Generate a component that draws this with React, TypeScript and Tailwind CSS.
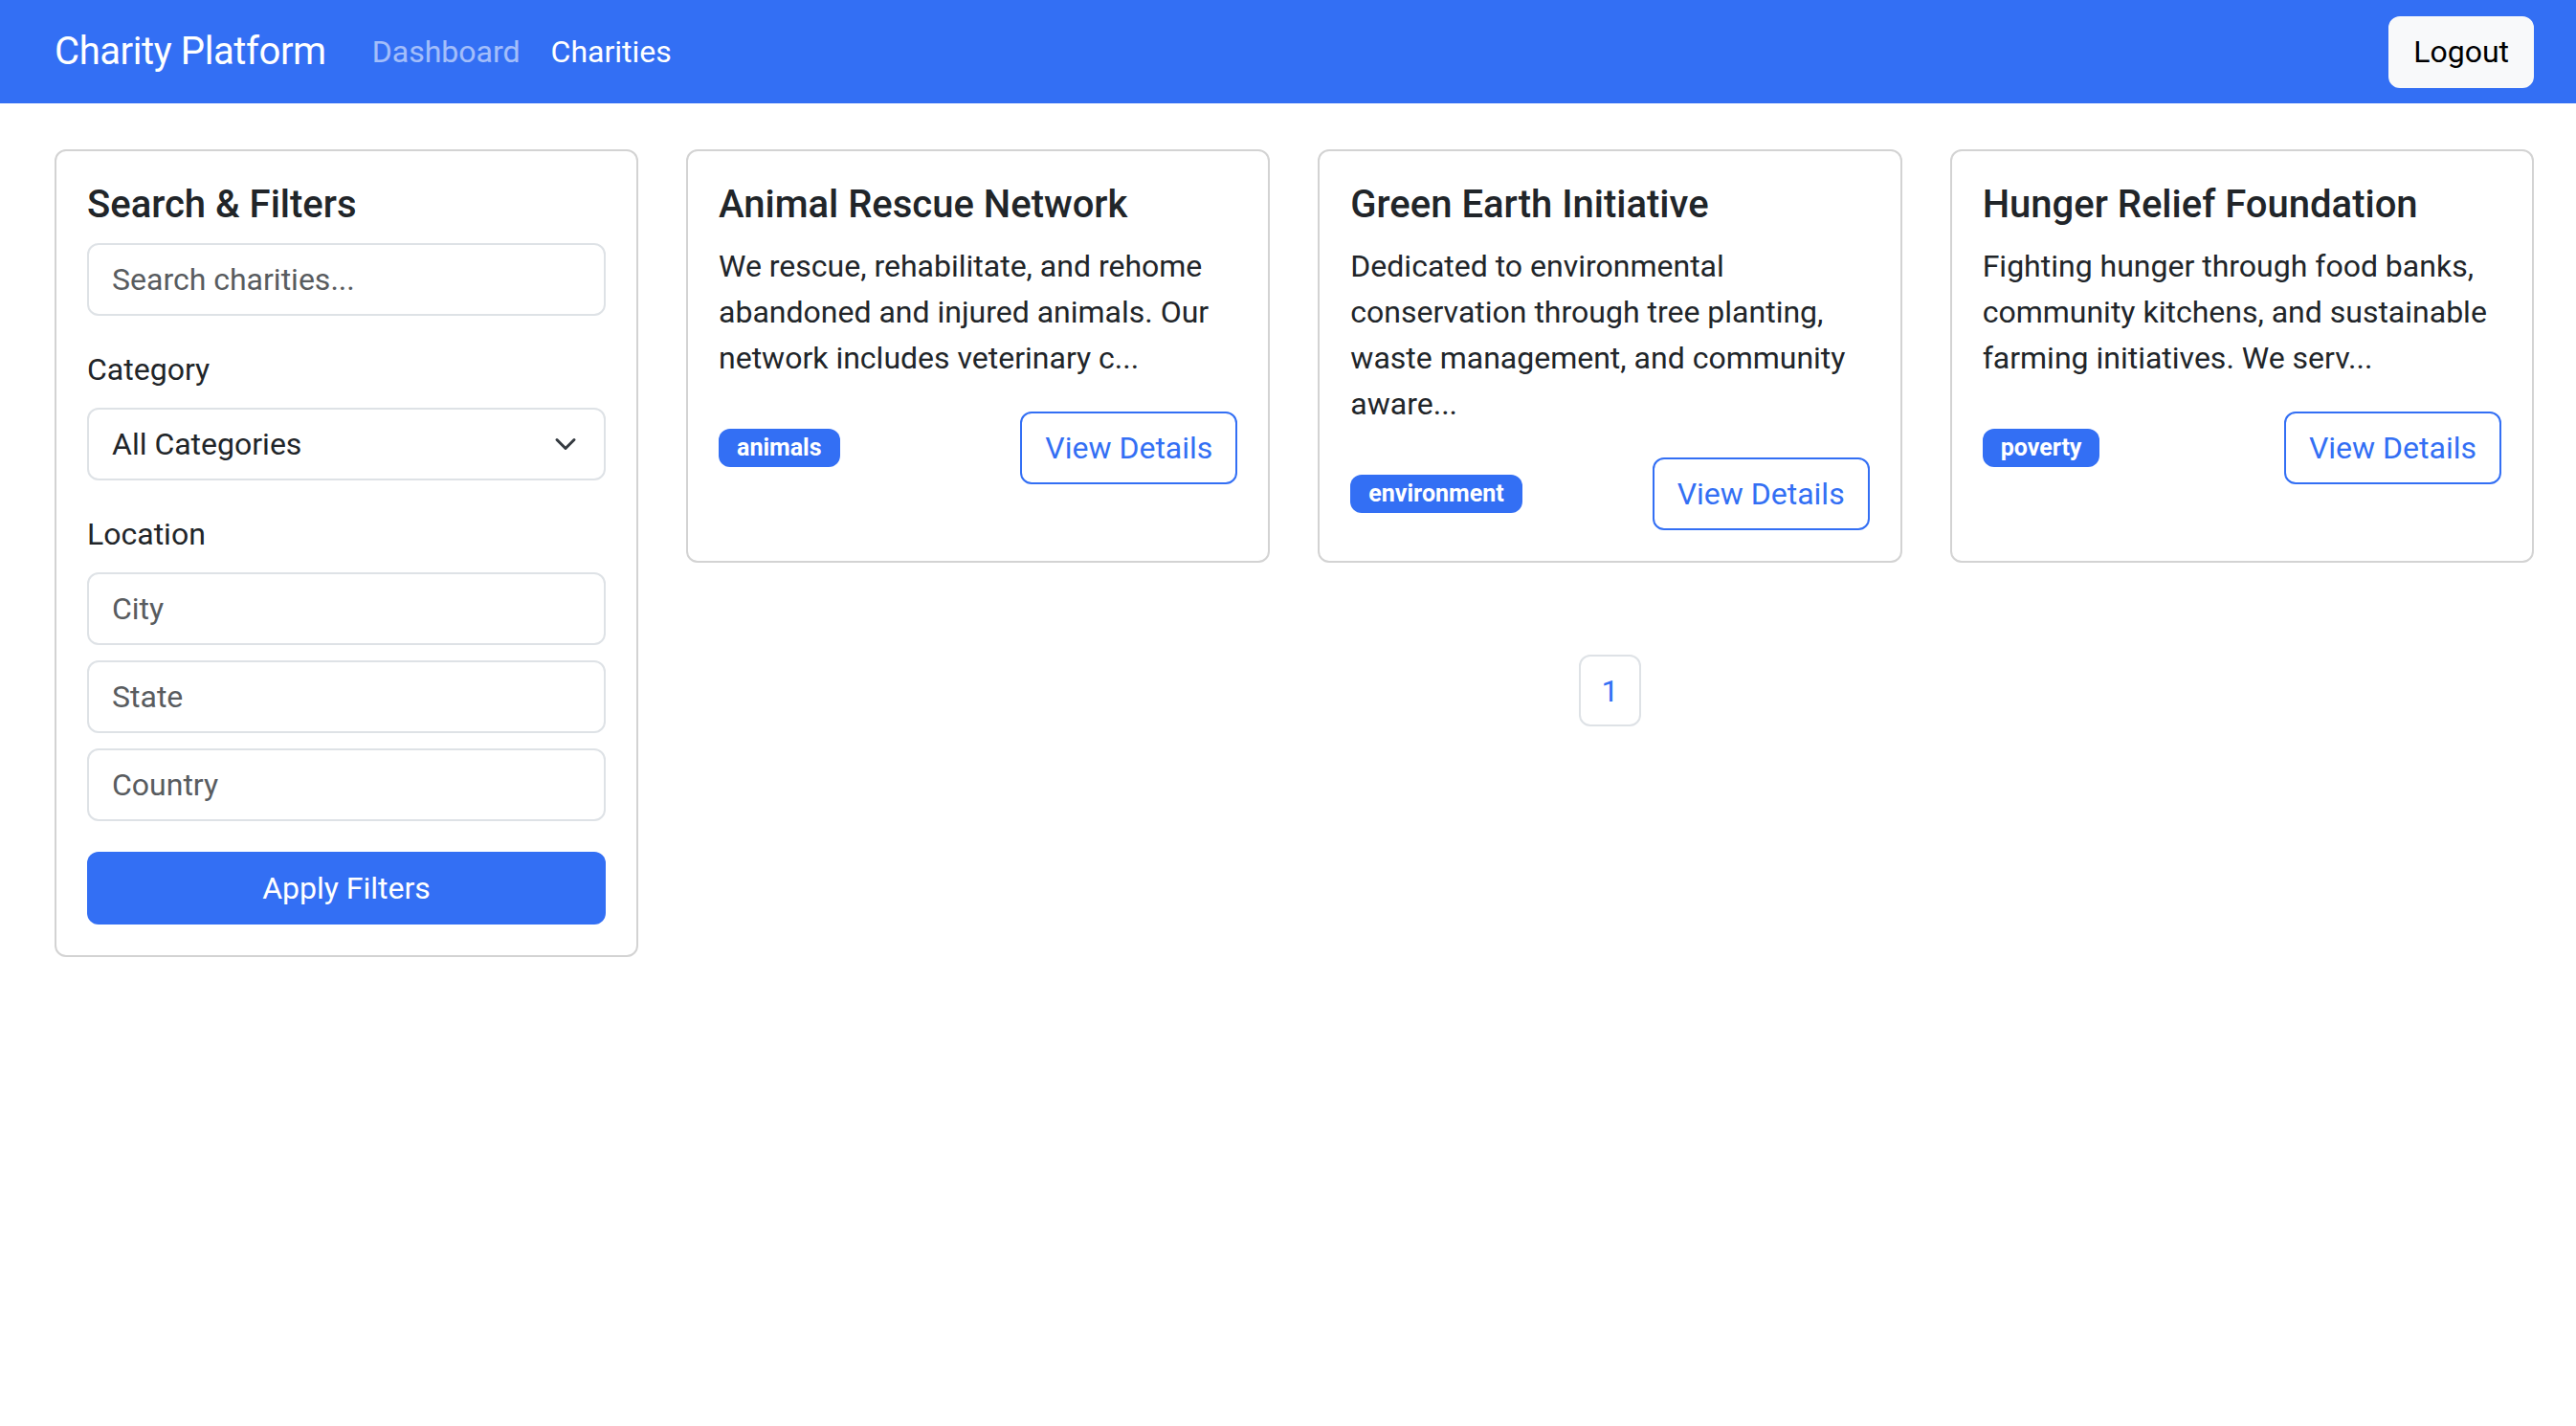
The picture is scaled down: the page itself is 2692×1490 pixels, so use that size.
import React from "react";

type Charity = {
  name: string;
  description: string;
  category: string;
};

const charities: Charity[] = [
  {
    name: "Animal Rescue Network",
    description:
      "We rescue, rehabilitate, and rehome abandoned and injured animals. Our network includes veterinary c...",
    category: "animals",
  },
  {
    name: "Green Earth Initiative",
    description:
      "Dedicated to environmental conservation through tree planting, waste management, and community aware...",
    category: "environment",
  },
  {
    name: "Hunger Relief Foundation",
    description:
      "Fighting hunger through food banks, community kitchens, and sustainable farming initiatives. We serv...",
    category: "poverty",
  },
];

function CharityCard({ charity }: { charity: Charity }) {
  return (
    <div className="flex h-full flex-col rounded-[12px] border-2 border-[#d3d3d3] bg-white p-[32px]">
      <h5 className="mb-[16px] text-[40px] font-medium leading-[48px]">
        {charity.name}
      </h5>
      <p className="mb-[32px] text-[32px] leading-[48px]">
        {charity.description}
      </p>
      <div className="flex items-center justify-between">
        <span className="rounded-[12px] bg-[#336ff4] px-[19px] py-[8px] text-[25px] font-bold leading-[24px] text-white">
          {charity.category}
        </span>
        <button className="h-[76px] rounded-[12px] border-2 border-[#336ff4] px-[24px] text-[32px] leading-[48px] text-[#336ff4]">
          View Details
        </button>
      </div>
    </div>
  );
}

const inputClass =
  "block h-[76px] w-full rounded-[12px] border-2 border-[#dee2e6] bg-white px-[24px] text-[32px] leading-[48px] text-[#212529] outline-none placeholder:text-[#595c5f]";

export default function App() {
  return (
    <div className="min-h-screen bg-white font-['Roboto',sans-serif] text-[#212529]">
      <nav className="flex h-[108px] items-center justify-between bg-[#336ff4] pl-[57px] pr-[44px]">
        <div className="flex items-center">
          <a href="#" className="mr-[32px] text-[40px] leading-[60px] tracking-[-0.01em] text-white">
            Charity Platform
          </a>
          <a href="#" className="px-[16px] text-[32px] leading-[48px] text-white/55">
            Dashboard
          </a>
          <a href="#" className="px-[16px] text-[32px] leading-[48px] text-white">
            Charities
          </a>
        </div>
        <button className="h-[75px] rounded-[12px] border-2 border-[#f8f9fa] bg-[#f8f9fa] px-[24px] text-[32px] leading-[48px] text-black">
          Logout
        </button>
      </nav>

      <main className="grid grid-cols-[610px_1fr] items-start gap-[50px] pl-[57px] pr-[44px] pt-[48px]">
        <aside className="rounded-[12px] border-2 border-[#d3d3d3] p-[32px]">
          <h5 className="mb-[16px] text-[40px] font-medium leading-[48px]">
            Search &amp; Filters
          </h5>
          <input className={inputClass} placeholder="Search charities..." />

          <label className="mb-[16px] mt-[32px] block text-[32px] leading-[48px]">
            Category
          </label>
          <div className="relative">
            <select className={inputClass + " appearance-none"} defaultValue="">
              <option value="">All Categories</option>
              <option value="animals">Animals</option>
              <option value="environment">Environment</option>
              <option value="poverty">Poverty</option>
            </select>
            <svg
              className="pointer-events-none absolute right-[30px] top-1/2 h-[24px] w-[24px] -translate-y-1/2"
              viewBox="0 0 16 16"
              fill="none"
              stroke="#343a40"
              strokeWidth="2"
              strokeLinecap="round"
              strokeLinejoin="round"
            >
              <path d="m2 5 6 6 6-6" />
            </svg>
          </div>

          <label className="mb-[16px] mt-[32px] block text-[32px] leading-[48px]">
            Location
          </label>
          <div className="flex flex-col gap-[16px]">
            <input className={inputClass} placeholder="City" />
            <input className={inputClass} placeholder="State" />
            <input className={inputClass} placeholder="Country" />
          </div>

          <button className="mt-[32px] h-[76px] w-full rounded-[12px] bg-[#336ff4] text-[32px] leading-[48px] text-white">
            Apply Filters
          </button>
        </aside>

        <section className="flex flex-col">
          <div className="grid grid-cols-3 gap-[50px]">
            {charities.map((c) => (
              <CharityCard key={c.name} charity={c} />
            ))}
          </div>
          <div className="mt-[96px] flex justify-center">
            <a
              href="#"
              className="flex h-[75px] w-[65px] items-center justify-center rounded-[12px] border-2 border-[#dee2e6] text-[32px] text-[#336ff4]"
            >
              1
            </a>
          </div>
        </section>
      </main>
    </div>
  );
}
